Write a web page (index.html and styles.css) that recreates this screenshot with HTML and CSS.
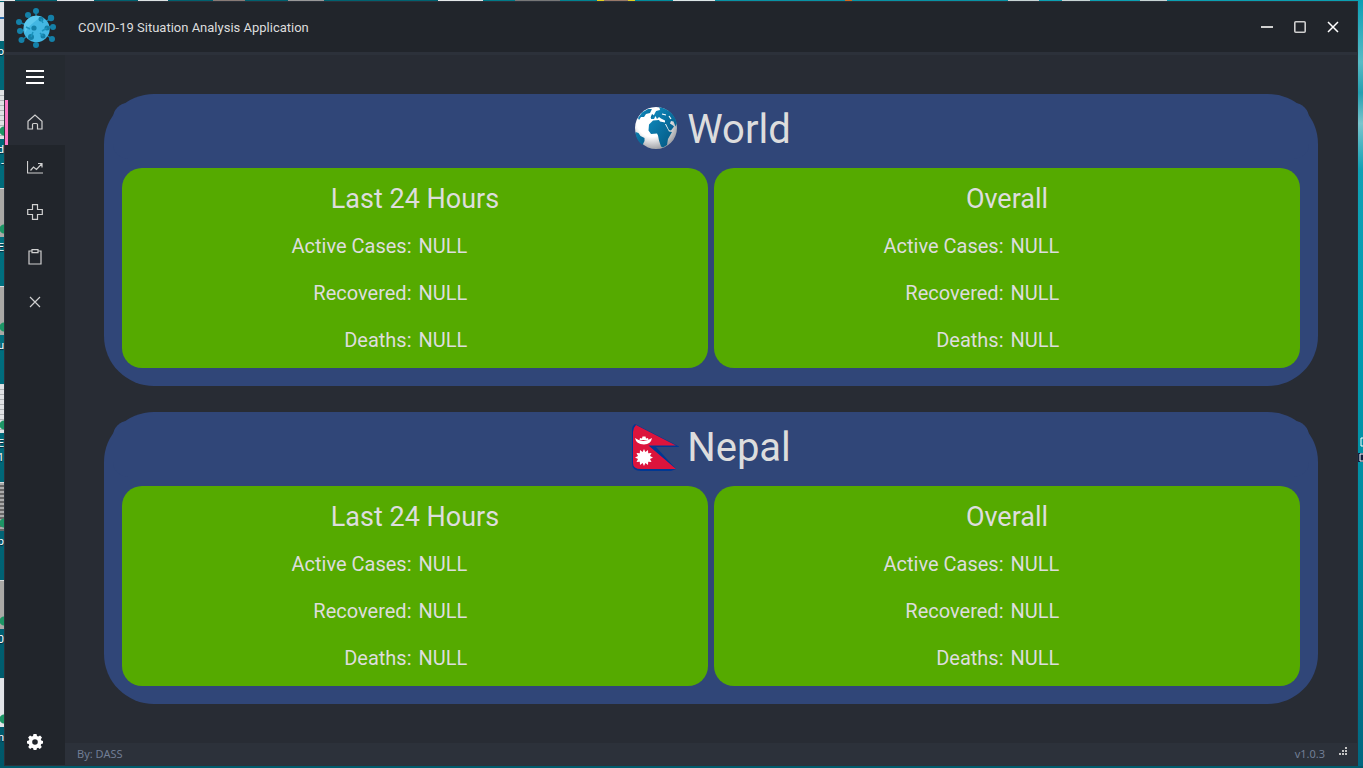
FILE: index.html
```html
<!DOCTYPE html>
<html lang="en">
<head>
<meta charset="utf-8">
<title>COVID-19 Situation Analysis Application</title>
<link rel="stylesheet" href="styles.css">
</head>
<body>
<div class="desktop">
  <div class="desk-left" aria-hidden="true">
    <div class="file light">o</div>
    <div class="file lined">d<br>-</div>
    <div class="file">E</div>
    <div class="file">u</div>
    <div class="file lined">E<br>1</div>
    <div class="file grid">p</div>
    <div class="file">0</div>
    <div class="file light">n</div>
  </div>
  <div class="window">
    <header class="titlebar">
      <svg class="logo" viewBox="0 0 40 40" aria-hidden="true">
        <g stroke="#1480a8" stroke-width="1.5"><path d="M20 3v10M12 7l5 8M35 10l-9 6M3 14l12 5M38 19H26M4 23l10-2M6 32l9-7M20 37V27M36 31l-10-7"/></g>
        <circle cx="20.500" cy="21" r="13.200" fill="#43b7e3"/>
        <path d="M8 17a13 13 0 0 1 18-8c-8 4-14 10-17 16z" fill="#5cc8ee"/>
        <g fill="#1480a8"><circle cx="20" cy="3" r="3"/><circle cx="12" cy="7" r="3"/><circle cx="35" cy="10" r="3.200"/><circle cx="3" cy="14" r="3"/><circle cx="37" cy="19" r="3"/><circle cx="4" cy="23" r="3"/><circle cx="5.500" cy="32" r="3"/><circle cx="20" cy="37" r="3"/><circle cx="36" cy="31" r="3"/><circle cx="18" cy="20" r="2.600"/><circle cx="25" cy="11" r="2.500"/><circle cx="31" cy="20" r="2.500"/><circle cx="15" cy="29" r="3"/><circle cx="27" cy="28" r="2.500"/></g>
        <path d="M25 11l2 4M31 20l-5 3M15 29l2-5M27 28l-3-3M10 19l4 2" stroke="#1b93bd" stroke-width="1.500"/>
      </svg>
      <h1 class="app-title">COVID-19 Situation Analysis Application</h1>
      <div class="win-buttons">
        <button class="win-btn" aria-label="Minimize"><svg viewBox="0 0 16 16"><path d="M2 8h12" stroke="#cfcfcf" stroke-width="2"/></svg></button>
        <button class="win-btn" aria-label="Maximize"><svg viewBox="0 0 16 16"><rect x="2.800" y="2.800" width="10.400" height="10.400" rx="1" fill="none" stroke="#cfcfcf" stroke-width="1.600"/></svg></button>
        <button class="win-btn" aria-label="Close"><svg viewBox="0 0 16 16"><path d="M3 3l10 10M13 3L3 13" stroke="#fff" stroke-width="1.500"/></svg></button>
      </div>
    </header>
    <div class="body">
      <nav class="sidebar">
        <button class="nav-btn toggle" aria-label="Menu"><svg class="burger" viewBox="0 0 20 16"><path d="M1 2h18M1 8h18M1 14h18" stroke="#fff" stroke-width="2"/></svg></button>
        <button class="nav-btn active" aria-label="Home"><svg viewBox="0 0 16 16"><path d="M1 7.200L8 1l7 6.200V15h-4.500v-4.500a1 1 0 0 0-1-1h-3a1 1 0 0 0-1 1V15H1z"/></svg></button>
        <button class="nav-btn" aria-label="Charts"><svg viewBox="0 0 16 16"><path d="M.5 2v12H16M3.500 11.500L6.500 8l3 2.500 5-5.500M11 4.500h4v4"/></svg></button>
        <button class="nav-btn" aria-label="Health"><svg viewBox="0 0 16 16"><path d="M5.500.7h5v4.800h4.800v5h-4.800v4.800h-5v-4.800H.7v-5h4.800z"/></svg></button>
        <button class="nav-btn" aria-label="Report"><svg viewBox="0 0 16 16"><path d="M5 2H2v13h12V2h-3M5 .7h6v3H5z"/></svg></button>
        <button class="nav-btn" aria-label="Exit"><svg viewBox="0 0 16 16"><path d="M3 3l10 10M13 3L3 13"/></svg></button>
        <button class="nav-btn settings" aria-label="Settings"><svg viewBox="0 0 16 16"><path fill="#fff" fill-rule="evenodd" stroke="none" d="M6.500 0h3l.5 2.100 1.200.5L13.100 1.500l1.900 2-1.200 1.800.5 1.200L16 7v2.500l-1.800.5-.5 1.200 1.100 1.700-2 2-1.700-1.100-1.200.5-.5 1.700H6.600l-.5-1.700-1.200-.5-1.800 1.100-1.900-2 1.100-1.700-.5-1.200L0 9.500V7l1.800-.5.5-1.200L1.100 3.500l1.900-2 1.900 1.100L6 2.100zM8 5.200a2.800 2.800 0 1 0 0 5.600 2.800 2.800 0 0 0 0-5.600z"/></svg></button>
      </nav>
      <div class="content">
        <main class="cards">
          <section class="card">
            <div class="card-head">
              <svg class="emblem" viewBox="-1 2 48 48" aria-hidden="true">
                <defs>
                  <radialGradient id="ball" cx=".4" cy=".35" r=".65"><stop offset=".55" stop-color="#fff"/><stop offset="1" stop-color="#a4a6aa"/></radialGradient>
                  <linearGradient id="land" x1="0" y1="0" x2="1" y2="1"><stop offset="0" stop-color="#118fc4"/><stop offset="1" stop-color="#02527c"/></linearGradient>
                </defs>
                <circle cx="24" cy="24" r="21" fill="url(#ball)"/>
                <path fill="url(#land)" d="M28 3.500c8 1 15 7 16.800 16l-1.300 3-2-5-2.500-.5-1 2.500 3 2 1 1-3 4-2-.5-3-6-1 0 4 7.500 3 .5-4 7-1 6-4 2.500-2-1-2-6-1-5-1-2-6 .5-2.500-3.500.5-6 4-4 6-.5 1 1.500 5 1v-2l-4-2-2-1.500-2 2-1.500-3-1.500 3-3 0 0-3 3-1 2-4 4-1-1-4z"/>
                <path fill="url(#land)" d="M10 8.500l6-3.500 4 0-2 4-4 1-2 3-3 0-2 3-1-2zM3.500 28l3 1 2 3 4 2 0 3-2 4c-4-3-7-8-7-13zM20 10l1.500 1-1 2-2 1z"/>
                <path d="M20 5l3 2 2-2M30 10l4 1M37 12l2 3" stroke="#fff" stroke-width="1.200" fill="none"/>
              </svg>
              <h2>World</h2>
            </div>
            <div class="panels">
              <section class="panel">
                <h3>Last 24 Hours</h3>
                <dl><dt>Active Cases:</dt><dd>NULL</dd><dt>Recovered:</dt><dd>NULL</dd><dt>Deaths:</dt><dd>NULL</dd></dl>
              </section>
              <section class="panel">
                <h3>Overall</h3>
                <dl><dt>Active Cases:</dt><dd>NULL</dd><dt>Recovered:</dt><dd>NULL</dd><dt>Deaths:</dt><dd>NULL</dd></dl>
              </section>
            </div>
          </section>
          <section class="card">
            <div class="card-head">
              <svg class="emblem" viewBox="0 0 48 48" aria-hidden="true">
                <path d="M4 0Q1 2 1 6v33q0 8 9 8h30l5-2-20-22h24z" fill="#003893"/>
                <path d="M5 1Q2 4 2 8v31q0 6 8 6h35L17.500 21.500H45z" fill="#dc143c"/>
                <path d="M4 14q8 6 17 0-1 6-8 6.500Q5 20 4 14z" fill="#fff"/>
                <path d="M8.500 16l.5-2 2 .5.500-2h3l.5 2 2-.5.500 2z" fill="#fff"/>
                <path d="M13 25l1.400 3 2.600-2 .2 3.300 3.300-.3-1.500 3 3 1.500-3 1.500 1.500 3-3.300-.3-.2 3.300-2.600-2-1.400 3-1.400-3L9 41l-.2-3.300-3.300.3L7 35l-3-1.500L7 32l-1.500-3 3.300.3L9 26l2.600 2z" fill="#fff"/>
              </svg>
              <h2>Nepal</h2>
            </div>
            <div class="panels">
              <section class="panel">
                <h3>Last 24 Hours</h3>
                <dl><dt>Active Cases:</dt><dd>NULL</dd><dt>Recovered:</dt><dd>NULL</dd><dt>Deaths:</dt><dd>NULL</dd></dl>
              </section>
              <section class="panel">
                <h3>Overall</h3>
                <dl><dt>Active Cases:</dt><dd>NULL</dd><dt>Recovered:</dt><dd>NULL</dd><dt>Deaths:</dt><dd>NULL</dd></dl>
              </section>
            </div>
          </section>
        </main>
        <footer class="statusbar">
          <span>By: DASS</span>
          <span class="version">v1.0.3</span>
          <svg class="grip" viewBox="0 0 8 8" aria-hidden="true"><path fill="#c4c4c4" d="M6 0h2v2H6zM3 3h2v2H3zM6 3h2v2H6zM0 6h2v2H0zM3 6h2v2H3zM6 6h2v2H6z"/></svg>
        </footer>
      </div>
    </div>
  </div>
  <div class="desk-right" aria-hidden="true">
    <svg viewBox="0 0 5 26"><path d="M5 1H3v8h2" fill="none" stroke="#fff"/><path d="M0 16h5v9H0z" fill="#102040"/><path d="M5 17H2v7h3" fill="none" stroke="#fff"/></svg>
  </div>
</div>
</body>
</html>
```
FILE: styles.css
```css
* { box-sizing: border-box; }
body { margin: 0; font-family: Roboto, "Noto Sans", sans-serif; color: #ddd; }
h1, h2, h3, dl, dd { margin: 0; font-weight: 400; }
button { padding: 0; border: 0; background: none; display: flex; align-items: center; justify-content: center; cursor: pointer; }

.desktop {
  display: grid;
  grid-template-columns: 4px 1fr 5px;
  min-height: 100vh;
  padding: 1px 0 2px;
  background:
    linear-gradient(90deg, #e8eaea 0 15px, #00616f 15px 57px, #e2e5e8 57px 94px, #00616f 94px 138px, #dde2e3 138px 168px, #00616f 168px 213px, #887b76 213px 245px, #00616f 245px 288px, #999 288px 324px, #006270 324px 438px, #e4e8e8 438px 483px, #007a88 483px 515px, #777 515px 560px, #008391 560px 597px, #e0d020 597px 604px, #987868 604px 628px, #e0d020 628px 635px, #008c9c 635px 673px, #dde6e6 673px 715px, #0893a5 715px 845px, #d06a20 845px 852px, #0893a5 852px 1008px, #c8d4d4 1008px 1039px, #0ba0b2 1039px 1062px, #c8d4d4 1062px 1090px, #0ba0b2 1090px 1140px, #c8d4d4 1140px 1167px, #0ba0b2 1167px) top / 100% 1px no-repeat,
    linear-gradient(#00798a, #006372 80%, #005b6c);
}
.desk-left {
  height: calc(100vh - 3px);
  overflow: hidden;
  padding-top: 1px;
  background: linear-gradient(#006575, #007080 40%, #00586a);
}
.file {
  height: 98px;
  overflow: hidden;
  display: flex;
  flex-direction: column;
  color: #fff;
  font-size: 11px;
  line-height: 14px;
  text-shadow: 0 1px 1px #001830;
  direction: rtl;
}
.file:first-child { height: 88px; }
.file:first-child::before { height: 38px; }
.file::before {
  content: "";
  flex: none;
  height: 48px;
  margin-bottom: 4px;
  background: radial-gradient(circle at 4px 40px, #1c9565 0 4px, transparent 5px), #aaa9a6;
  border-top: 1px solid #ddd;
}
.file.light::before { background: radial-gradient(circle at 4px 40px, #1c9565 0 4px, transparent 5px), #e2e4e8; }
.file.lined::before { background: radial-gradient(circle at 4px 40px, #1c9565 0 4px, transparent 5px), repeating-linear-gradient(#e0e2e4 0 4px, #aeb2b4 4px 5px); }
.file.grid::before { background: radial-gradient(circle at 4px 40px, #1c9565 0 4px, transparent 5px), repeating-linear-gradient(#aaa 0 2px, #666 2px 4px); }
.file.light:first-child::before { background: linear-gradient(#e2e4e8 0 14px, #2d6fae 14px 16px, #d8dade 16px); }
.desk-right {
  padding-top: 436px;
  background: linear-gradient(#0b9fb4, #57bbc5 8%, #239fb0 12%, #79c5cd 16%, #0fa1b5 22%, #009bb0 45%, #00899d 70%, #006780);
}
.desk-right svg { display: block; width: 5px; height: 26px; }

.window {
  display: flex;
  flex-direction: column;
  background: #282c34;
  border: 1px solid #2c313a;
}
.titlebar {
  display: flex;
  align-items: center;
  height: 53px;
  padding-left: 11px;
  padding-right: 10px;
  background: #21252b;
  border-bottom: 3px solid #2c313a;
}
.logo { width: 40px; height: 40px; margin-top: 2px; }
.app-title {
  flex: 1;
  margin-left: 22px;
  padding-top: 2px;
  font-size: 13px;
  line-height: 16px;
}
.win-buttons { display: flex; gap: 5px; }
.win-btn { width: 28px; height: 28px; }
.win-btn svg { width: 16px; height: 16px; }

.body { flex: 1; display: flex; }
.sidebar {
  width: 60px;
  display: flex;
  flex-direction: column;
  background: #21252b;
}
.nav-btn { height: 45px; width: 100%; padding-bottom: 2px; }
.nav-btn svg { width: 16px; height: 16px; fill: none; stroke: #d0d0d0; stroke-width: 1.2; }
.nav-btn.toggle { background: #252a30; }
.nav-btn .burger { width: 20px; stroke-width: 2; }
.nav-btn.active { background: #282c34; box-shadow: inset 3px 0 #ff79c6; }
.nav-btn.settings { margin-top: auto; }

.content { flex: 1; display: flex; flex-direction: column; }
.cards {
  flex: 1;
  display: flex;
  flex-direction: column;
  gap: 26px;
  padding: 39px;
}
.card { flex: 1; display: flex; flex-direction: column; padding: 9px; border-radius: 50px; background: #304678; }
.card-head {
  display: flex;
  align-items: center;
  justify-content: center;
  gap: 8px;
  height: 56px;
  padding: 8px 0 10px;
  border-radius: 15px;
  background: #304678;
}
.emblem { width: 48px; height: 48px; flex: none; }
.card h2 { font-size: 40px; line-height: 48px; }
.panels { flex: 1; display: grid; grid-template-columns: 1fr 1fr; gap: 6px; padding: 9px; }
.panel { padding: 10px 9px 0; border-radius: 20px; background: #5a0; }
.panel h3 { font-size: 27px; line-height: 42px; text-align: center; }
.panel dl {
  display: grid;
  grid-template-columns: 1fr 1fr;
  column-gap: 7px;
  padding-top: 3px;
  font-size: 20px;
  line-height: 47px;
}
.panel dt { text-align: right; }

.statusbar {
  display: flex;
  align-items: center;
  height: 22px;
  padding: 0 10px 0 12px;
  background: #2c313a;
  color: #717e95;
  font: 11px/16px "Noto Sans", "Open Sans", sans-serif;
}
.version { margin-left: auto; }
.grip { width: 8px; height: 8px; margin: 0 0 6px 14px; }
```
